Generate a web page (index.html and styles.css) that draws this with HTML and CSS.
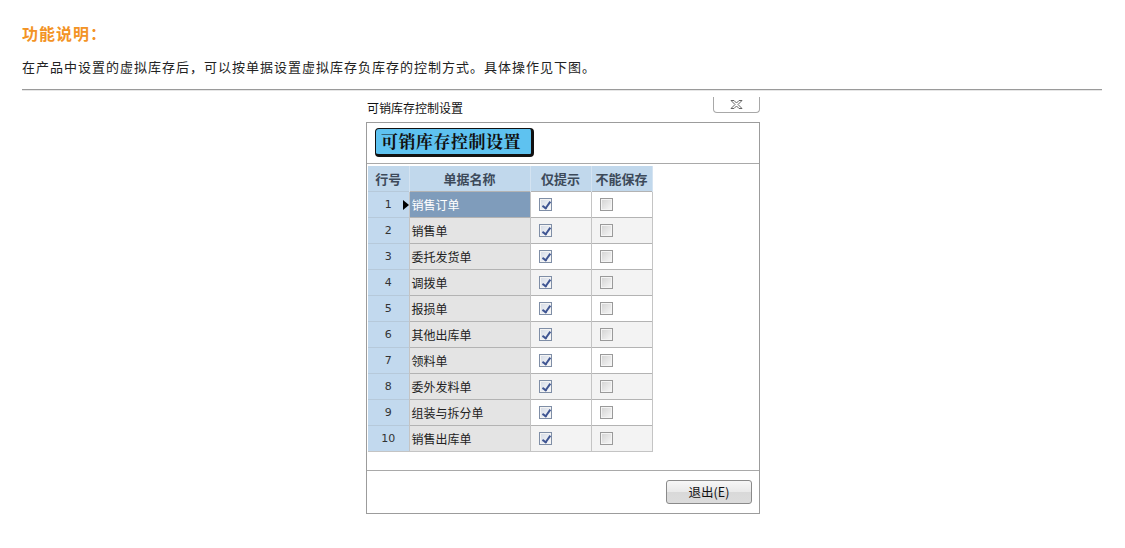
FILE: index.html
```html
<!DOCTYPE html>
<html lang="zh-CN">
<head>
<meta charset="utf-8">
<title>可销库存控制设置</title>
<link rel="stylesheet" href="styles.css">
</head>
<body>
<div class="page">
  <h2 class="sec-title">功能说明：</h2>
  <p class="desc">在产品中设置的虚拟库存后，可以按单据设置虚拟库存负库存的控制方式。具体操作见下图。</p>
  <div class="rule"></div>

  <div class="dialog">
    <div class="caption">
      <span class="caption-text">可销库存控制设置</span>
      <span class="close-btn">
        <svg width="13" height="9" viewBox="0 0 13 9"><path d="M1 0.5h3l2.5 2.5 2.5-2.5h3l-4 4 4 4h-3L6.5 6 4 8.5H1l4-4z" fill="none" stroke="#666" stroke-width="1"/></svg>
      </span>
    </div>
    <div class="frame">
      <div class="badge-area"><div class="badge">可销库存控制设置</div></div>
      <div class="grid-panel">
        <table class="grid">
          <colgroup><col class="c-no"><col class="c-name"><col class="c-chk"><col class="c-chk"></colgroup>
          <thead>
            <tr><th>行号</th><th>单据名称</th><th>仅提示</th><th>不能保存</th></tr>
          </thead>
          <tbody>
            <tr class="odd sel"><td class="no">1<span class="ptr"></span></td><td class="name">销售订单</td><td><span class="cb on"></span></td><td><span class="cb"></span></td></tr>
            <tr class="even"><td class="no">2</td><td class="name">销售单</td><td><span class="cb on"></span></td><td><span class="cb"></span></td></tr>
            <tr class="odd"><td class="no">3</td><td class="name">委托发货单</td><td><span class="cb on"></span></td><td><span class="cb"></span></td></tr>
            <tr class="even"><td class="no">4</td><td class="name">调拨单</td><td><span class="cb on"></span></td><td><span class="cb"></span></td></tr>
            <tr class="odd"><td class="no">5</td><td class="name">报损单</td><td><span class="cb on"></span></td><td><span class="cb"></span></td></tr>
            <tr class="even"><td class="no">6</td><td class="name">其他出库单</td><td><span class="cb on"></span></td><td><span class="cb"></span></td></tr>
            <tr class="odd"><td class="no">7</td><td class="name">领料单</td><td><span class="cb on"></span></td><td><span class="cb"></span></td></tr>
            <tr class="even"><td class="no">8</td><td class="name">委外发料单</td><td><span class="cb on"></span></td><td><span class="cb"></span></td></tr>
            <tr class="odd"><td class="no">9</td><td class="name">组装与拆分单</td><td><span class="cb on"></span></td><td><span class="cb"></span></td></tr>
            <tr class="even"><td class="no">10</td><td class="name">销售出库单</td><td><span class="cb on"></span></td><td><span class="cb"></span></td></tr>
          </tbody>
        </table>
      </div>
      <div class="footer">
        <span class="btn">退出(E)</span>
      </div>
    </div>
  </div>
</div>
</body>
</html>
```

FILE: styles.css
```css
* { box-sizing: border-box; }
html, body { margin: 0; padding: 0; background: #fff; }
body {
  font-family: "Noto Sans CJK SC", "Noto Sans", sans-serif;
  color: #222;
}
.page { padding: 22px 23px 0 22px; }
.sec-title {
  margin: 0;
  font-size: 16px;
  line-height: 22px;
  font-weight: bold;
  color: #f39325;
  letter-spacing: 1px;
}
.desc {
  margin: 14px 0 0;
  font-size: 13px;
  line-height: 18px;
  letter-spacing: 1px;
  color: #222;
}
.rule {
  margin-top: 13px;
  height: 2px;
  border-top: 1px solid #9a9a9a;
  border-bottom: 1px solid #e6e6e6;
}
.dialog {
  width: 394px;
  margin: 6px 0 0 344px;
}
.caption {
  display: flex;
  justify-content: space-between;
  align-items: flex-start;
  height: 25px;
  padding-left: 1px;
}
.caption-text {
  font-size: 12px;
  line-height: 14px;
  margin-top: 4px;
  color: #111;
}
.close-btn {
  width: 47px;
  height: 16px;
  border: 1px solid #a8a8a8;
  border-top: none;
  border-radius: 0 0 4px 4px;
  display: flex;
  align-items: center;
  justify-content: center;
  background: #fff;
}
.frame {
  border: 1px solid #9c9c9c;
  height: 392px;
  display: flex;
  flex-direction: column;
}
.badge-area {
  height: 40px;
  padding: 5px 0 0 8px;
}
.badge {
  width: 159px;
  height: 29px;
  background: #5ec2f0;
  border: 1px solid #111;
  border-right-width: 3px;
  border-bottom-width: 3px;
  border-radius: 4px;
  font-family: "Noto Serif CJK SC", "Noto Sans CJK SC", serif;
  font-weight: bold;
  font-size: 17px;
  line-height: 24px;
  padding-left: 5px;
  color: #111;
  letter-spacing: 0.5px;
}
.grid-panel {
  height: 308px;
  border-top: 1px solid #a9a9a9;
  border-bottom: 1px solid #a9a9a9;
  padding: 2px 0 0 1px;
}
.grid {
  border-collapse: collapse;
  table-layout: fixed;
  width: 284px;
  font-size: 12px;
}
.c-no { width: 41px; }
.c-name { width: 121px; }
.c-chk { width: 61px; }
.grid th {
  height: 25px;
  background: #c1d8ec;
  color: #3d4a5a;
  font-weight: bold;
  font-size: 13px;
  border-right: 1px solid #d4e3f1;
  padding: 0;
  text-align: center;
}
.grid td {
  height: 26px;
  padding: 0;
  border-top: 1px solid #b3b3b3;
  border-right: 1px solid #c4c4c4;
  vertical-align: middle;
}
.grid tr.odd td { background: #ffffff; }
.grid tr.even td { background: #f3f3f3; }
.grid td.no {
  background: #c2d9ee !important;
  border-top-color: #b6c9da;
  text-align: center;
  font-size: 11px;
  font-family: "DejaVu Sans", sans-serif;
  color: #333;
  position: relative;
}
.grid td.name {
  background: #e4e4e4 !important;
  padding-left: 2px;
  color: #222;
}
.grid tr.sel td.name {
  background: #7f9cbb !important;
  color: #fff;
}
.ptr {
  position: absolute;
  right: 0;
  top: 8px;
  width: 0;
  height: 0;
  border-top: 5px solid transparent;
  border-bottom: 5px solid transparent;
  border-left: 6px solid #000;
}
.grid tbody tr:last-child td { border-bottom: 1px solid #c4c4c4; }
.cb {
  display: block;
  width: 13px;
  height: 13px;
  margin-left: 8px;
  border: 1px solid #9a9a9a;
  background: linear-gradient(135deg, #d2d2d2, #f8f8f8);
  box-shadow: inset 0 0 0 1px #f4f4f4;
  position: relative;
}
.cb.on {
  border-color: #7f8ea6;
  background: linear-gradient(135deg, #d3d9e4, #fafbfd);
}
.cb.on::after {
  content: "";
  position: absolute;
  left: 4px;
  top: 1px;
  width: 3px;
  height: 7px;
  border-right: 2px solid #3f5592;
  border-bottom: 2px solid #3f5592;
  transform: rotate(35deg);
}
.footer {
  flex: 1;
  display: flex;
  justify-content: flex-end;
  align-items: flex-start;
  padding: 9px 7px 0 0;
}
.btn {
  width: 86px;
  height: 24px;
  border: 1px solid #8a8a8a;
  border-radius: 3px;
  background: linear-gradient(#f7f7f7, #e9e9e9 50%, #d9d9d9 51%, #dcdcdc);
  font-size: 12.5px;
  line-height: 22px;
  text-align: center;
  color: #111;
}
```
